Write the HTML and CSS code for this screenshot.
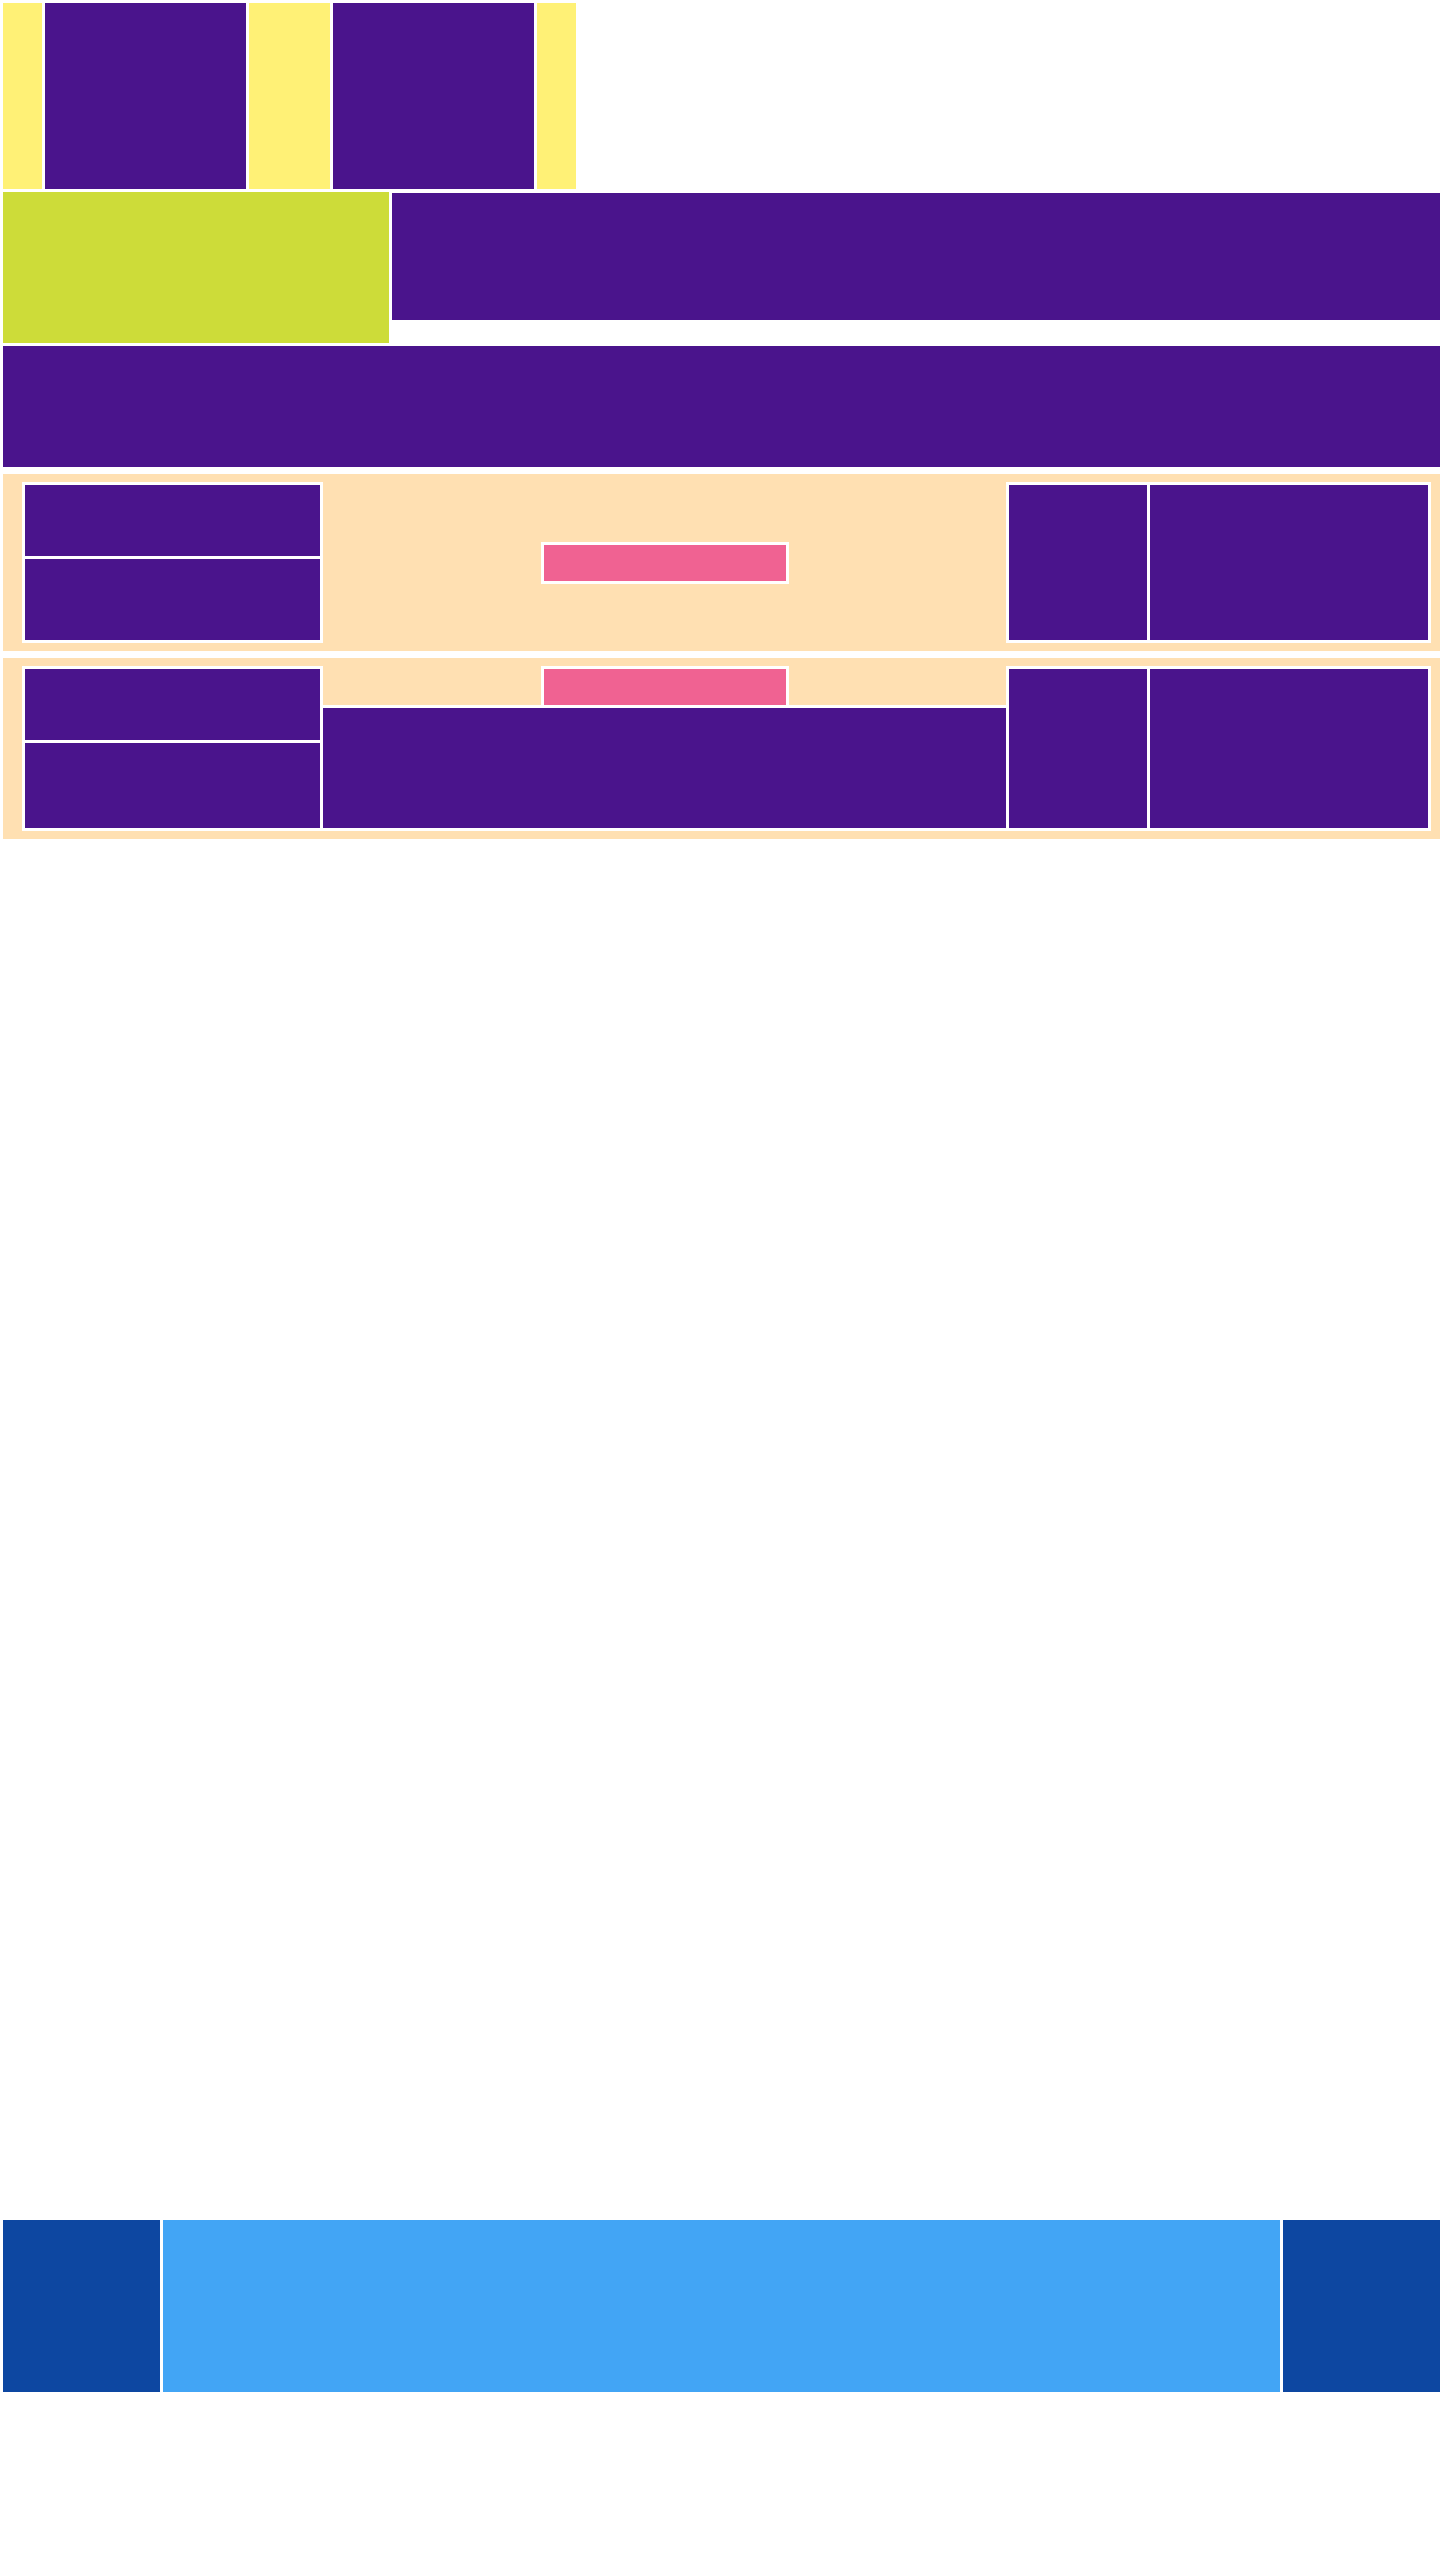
FILE: index.html
```html
<!DOCTYPE html>
<html lang="en">
<head>
    <meta charset="UTF-8">
    <meta name="viewport" content="width=device-width, initial-scale=1.0">
    <title>Layout Blocks</title>
    <link rel="stylesheet" href="styles.css">
</head>
<body>
    <div class="page">
        <div class="top-strip">
            <div class="tile yellow narrow"></div>
            <div class="tile purple wide"></div>
            <div class="tile yellow medium"></div>
            <div class="tile purple wide"></div>
            <div class="tile yellow narrow"></div>
        </div>

        <div class="hero">
            <div class="hero-side"></div>
            <div class="hero-main"></div>
        </div>

        <div class="banner"></div>

        <div class="panel">
            <div class="frame stack">
                <div class="block s1-a"></div>
                <div class="block s1-b"></div>
            </div>
            <div class="middle centered">
                <div class="tag"></div>
            </div>
            <div class="frame pair">
                <div class="block left-col"></div>
                <div class="block right-col"></div>
            </div>
        </div>

        <div class="panel second">
            <div class="frame stack">
                <div class="block s2-a"></div>
                <div class="block s2-b"></div>
            </div>
            <div class="middle column">
                <div class="tag open"></div>
                <div class="content"></div>
            </div>
            <div class="frame pair">
                <div class="block left-col"></div>
                <div class="block right-col"></div>
            </div>
        </div>

        <div class="footer">
            <div class="footer-end"></div>
            <div class="footer-mid"></div>
            <div class="footer-end"></div>
        </div>
    </div>
</body>
</html>
```

FILE: styles.css
```css
body {
    margin: 0;
    background-color: #fff;
    font-family: "Liberation Sans", Arial, sans-serif;
}
.page {
    padding: 3px 0 0 3px;
}

/* top row of tiles */
.top-strip {
    display: flex;
    gap: 3px;
    height: 186px;
}
.tile.narrow { width: 39px; }
.tile.medium { width: 81px; }
.tile.wide { width: 201px; }
.yellow { background-color: #FFF176; }
.purple { background-color: #4A148C; }

/* hero */
.hero {
    display: flex;
    align-items: flex-start;
    gap: 3px;
    margin-top: 3px;
}
.hero-side {
    width: 386px;
    height: 151px;
    background-color: #CDDC39;
}
.hero-main {
    flex: 1;
    height: 127px;
    margin-top: 1px;
    background-color: #4A148C;
}

.banner {
    height: 121px;
    margin-top: 3px;
    background-color: #4A148C;
}

/* peach panels */
.panel {
    display: flex;
    margin-top: 7px;
    padding: 8px 9px 8px 19px;
    background-color: #FFE0B2;
}
.frame {
    display: flex;
    gap: 3px;
    padding: 3px;
    background-color: #fff;
}
.stack {
    flex-direction: column;
    width: 295px;
}
.pair {
    width: 419px;
}
.block {
    background-color: #4A148C;
}
.s1-a { height: 71px; }
.s1-b { height: 81px; }
.s2-a { height: 71px; }
.s2-b { height: 85px; }
.left-col { width: 138px; }
.right-col { flex: 1; }

.middle {
    flex: 1;
    display: flex;
    flex-direction: column;
    align-items: center;
}
.middle.centered {
    justify-content: center;
}
.tag {
    width: 242px;
    height: 36px;
    border: 3px solid #fff;
    background-color: #F06292;
}
.tag.open {
    border-bottom: none;
}
.content {
    align-self: stretch;
    flex: 1;
    border-top: 3px solid #fff;
    border-bottom: 3px solid #fff;
    background-color: #4A148C;
}

/* footer bar */
.footer {
    display: flex;
    gap: 3px;
    height: 172px;
    margin-top: 1381px;
}
.footer-end {
    width: 157px;
    background-color: #0D47A1;
}
.footer-mid {
    flex: 1;
    background-color: #42A5F5;
}
```
